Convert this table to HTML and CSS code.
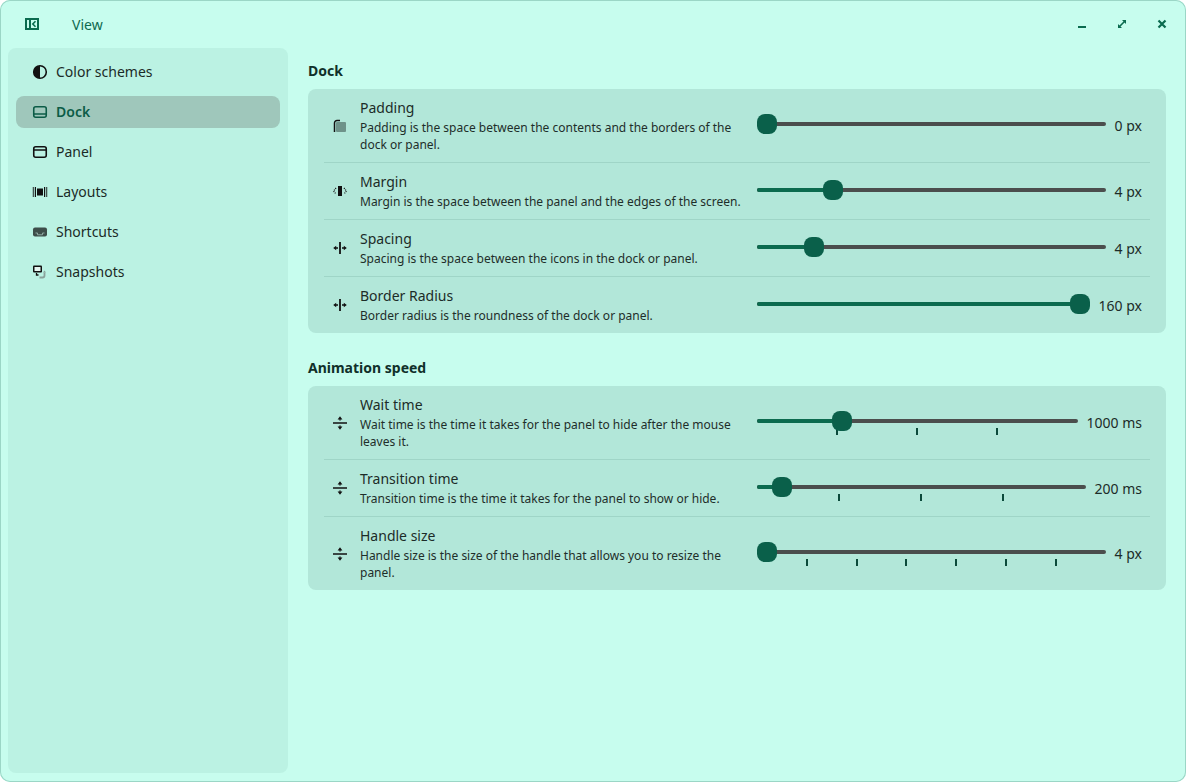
FILE: index.html
```html
<!DOCTYPE html>
<html>
<head>
<meta charset="utf-8">
<link rel="stylesheet" href="styles.css">
</head>
<body>
<div class="window">
  <header class="titlebar">
    <button class="tb-btn toggle">
      <svg width="16" height="16" viewBox="0 0 16 16"><path fill-rule="evenodd" fill="#0b6b4f" d="M1 2h14v12H1z M3 4v8h2V4z M7 4v8h6V4z"/><path d="M11.5 5.2 8.8 8l2.7 2.8" stroke="#0b6b4f" stroke-width="1.6" fill="none"/></svg>
    </button>
    <span class="title">View</span>
    <div class="spacer"></div>
    <div class="controls">
      <button class="tb-btn"><svg width="16" height="16" viewBox="0 0 16 16"><path d="M4 11h8" stroke="#0b6b4f" stroke-width="2"/></svg></button>
      <button class="tb-btn"><svg width="16" height="16" viewBox="0 0 16 16"><path d="M5 11 11 5" stroke="#0b6b4f" stroke-width="1.6"/><path d="M8 4h4v4z M4 8v4h4z" fill="#0b6b4f"/></svg></button>
      <button class="tb-btn"><svg width="16" height="16" viewBox="0 0 16 16"><path d="M4.5 4.5l7 7M11.5 4.5l-7 7" stroke="#0b6b4f" stroke-width="2.2"/></svg></button>
    </div>
  </header>
  <div class="main">
    <nav class="sidebar">
      <div class="nav-item">
        <svg class="ico" width="16" height="16" viewBox="0 0 16 16"><circle cx="8" cy="8" r="6.3" stroke="#111" stroke-width="1.6" fill="none"/><path d="M8 1.7a6.3 6.3 0 0 0 0 12.6z" fill="#111"/></svg>
        <span>Color schemes</span>
      </div>
      <div class="nav-item active">
        <svg class="ico" width="16" height="16" viewBox="0 0 16 16"><rect x="1.75" y="2.75" width="12.5" height="10.5" rx="2" stroke="#0c5c47" stroke-width="1.6" fill="none"/><path d="M2 10h12" stroke="#0c5c47" stroke-width="1.6"/></svg>
        <span>Dock</span>
      </div>
      <div class="nav-item">
        <svg class="ico" width="16" height="16" viewBox="0 0 16 16"><rect x="1.75" y="2.75" width="12.5" height="10.5" rx="2" stroke="#111" stroke-width="1.6" fill="none"/><path d="M2 6h12" stroke="#111" stroke-width="1.6"/></svg>
        <span>Panel</span>
      </div>
      <div class="nav-item">
        <svg class="ico" width="16" height="16" viewBox="0 0 16 16"><g fill="#111"><rect x="0.8" y="3" width="0.9" height="10"/><rect x="2.8" y="3" width="1.2" height="10"/><rect x="5" y="4.5" width="6" height="7"/><rect x="12" y="3" width="1.2" height="10"/><rect x="14.3" y="3" width="0.9" height="10"/></g></svg>
        <span>Layouts</span>
      </div>
      <div class="nav-item">
        <svg class="ico" width="16" height="16" viewBox="0 0 16 16"><rect x="1" y="3.5" width="14" height="9" rx="2" fill="#3d4d49"/><path d="M3.5 9h2v1.8h5V9h2" stroke="#8fa8a1" stroke-width="1" fill="none"/></svg>
        <span>Shortcuts</span>
      </div>
      <div class="nav-item">
        <svg class="ico" width="16" height="16" viewBox="0 0 16 16"><rect x="1" y="1.5" width="9" height="7" rx="1" fill="#111"/><rect x="2.5" y="3" width="6" height="4" fill="#e6f5f0"/><path d="M4.5 9v2h2" stroke="#111" stroke-width="1.3" fill="none"/><path d="M12.5 8.5v3a2 2 0 0 1-2 2H7.5" stroke="#8aa19b" stroke-width="1.8" fill="none"/><path d="M11 8.5h3l-1.5-2z" fill="#8aa19b"/></svg>
        <span>Snapshots</span>
      </div>
    </nav>
    <main class="content">
      <h2 class="section-title">Dock</h2>
      <section class="card">
        <div class="row">
          <svg class="ico" width="16" height="16" viewBox="0 0 16 16"><rect x="4" y="4" width="10" height="10" rx="1" fill="#6e9289"/><path d="M2.5 14V5a2.5 2.5 0 0 1 2.5-2.5h3" stroke="#111" stroke-width="1.5" fill="none"/></svg>
          <div class="text"><div class="name">Padding</div><div class="desc">Padding is the space between the contents and the borders of the dock or panel.</div></div>
          <div class="control"><div class="slider" style="--p:0"><div class="track"></div><div class="fill"></div><div class="thumb"></div></div><span class="value">0 px</span></div>
        </div>
        <div class="row">
          <svg class="ico" width="16" height="16" viewBox="0 0 16 16"><rect x="6" y="3" width="4" height="10" fill="#111"/><path d="M4 5 1.5 8 4 11M12 5l2.5 3L12 11" stroke="#111" stroke-width="1.2" stroke-dasharray="1 1" fill="none"/></svg>
          <div class="text"><div class="name">Margin</div><div class="desc">Margin is the space between the panel and the edges of the screen.</div></div>
          <div class="control"><div class="slider" style="--p:0.2"><div class="track"></div><div class="fill"></div><div class="thumb"></div></div><span class="value">4 px</span></div>
        </div>
        <div class="row">
          <svg class="ico" width="16" height="16" viewBox="0 0 16 16"><path d="M8 2v12" stroke="#111" stroke-width="1.8"/><path d="M3.5 8h2.5M10 8h2.5" stroke="#111" stroke-width="1.3"/><path d="M1.2 8 4.2 5.7v4.6zM14.8 8 11.8 5.7v4.6z" fill="#111"/></svg>
          <div class="text"><div class="name">Spacing</div><div class="desc">Spacing is the space between the icons in the dock or panel.</div></div>
          <div class="control"><div class="slider" style="--p:0.143"><div class="track"></div><div class="fill"></div><div class="thumb"></div></div><span class="value">4 px</span></div>
        </div>
        <div class="row">
          <svg class="ico" width="16" height="16" viewBox="0 0 16 16"><path d="M8 2v12" stroke="#111" stroke-width="1.8"/><path d="M3.5 8h2.5M10 8h2.5" stroke="#111" stroke-width="1.3"/><path d="M1.2 8 4.2 5.7v4.6zM14.8 8 11.8 5.7v4.6z" fill="#111"/></svg>
          <div class="text"><div class="name">Border Radius</div><div class="desc">Border radius is the roundness of the dock or panel.</div></div>
          <div class="control"><div class="slider" style="--p:1"><div class="track"></div><div class="fill"></div><div class="thumb"></div></div><span class="value">160 px</span></div>
        </div>
      </section>

      <h2 class="section-title second">Animation speed</h2>
      <section class="card">
        <div class="row">
          <svg class="ico" width="16" height="16" viewBox="0 0 16 16"><path d="M1 8h14" stroke="#111" stroke-width="1.5"/><path d="M8 5.5V4.2M8 10.5v1.3" stroke="#111" stroke-width="1.4"/><path d="M8 1.2 5.6 4.6h4.8zM8 14.8 5.6 11.4h4.8z" fill="#111"/></svg>
          <div class="text"><div class="name">Wait time</div><div class="desc">Wait time is the time it takes for the panel to hide after the mouse leaves it.</div></div>
          <div class="control"><div class="slider" style="--p:0.25"><div class="track"></div><div class="fill"></div><i class="tick" style="left:25%"></i><i class="tick" style="left:50%"></i><i class="tick" style="left:75%"></i><div class="thumb"></div></div><span class="value">1000 ms</span></div>
        </div>
        <div class="row">
          <svg class="ico" width="16" height="16" viewBox="0 0 16 16"><path d="M1 8h14" stroke="#111" stroke-width="1.5"/><path d="M8 5.5V4.2M8 10.5v1.3" stroke="#111" stroke-width="1.4"/><path d="M8 1.2 5.6 4.6h4.8zM8 14.8 5.6 11.4h4.8z" fill="#111"/></svg>
          <div class="text"><div class="name">Transition time</div><div class="desc">Transition time is the time it takes for the panel to show or hide.</div></div>
          <div class="control"><div class="slider" style="--p:0.05"><div class="track"></div><div class="fill"></div><i class="tick" style="left:25%"></i><i class="tick" style="left:50%"></i><i class="tick" style="left:75%"></i><div class="thumb"></div></div><span class="value">200 ms</span></div>
        </div>
        <div class="row">
          <svg class="ico" width="16" height="16" viewBox="0 0 16 16"><path d="M1 8h14" stroke="#111" stroke-width="1.5"/><path d="M8 5.5V4.2M8 10.5v1.3" stroke="#111" stroke-width="1.4"/><path d="M8 1.2 5.6 4.6h4.8zM8 14.8 5.6 11.4h4.8z" fill="#111"/></svg>
          <div class="text"><div class="name">Handle size</div><div class="desc">Handle size is the size of the handle that allows you to resize the panel.</div></div>
          <div class="control"><div class="slider" style="--p:0"><div class="track"></div><div class="fill"></div><i class="tick" style="left:14.286%"></i><i class="tick" style="left:28.571%"></i><i class="tick" style="left:42.857%"></i><i class="tick" style="left:57.143%"></i><i class="tick" style="left:71.429%"></i><i class="tick" style="left:85.714%"></i><div class="thumb"></div></div><span class="value">4 px</span></div>
        </div>
      </section>
    </main>
  </div>
</div>
</body>
</html>
```

FILE: styles.css
```css
* { box-sizing: border-box; }
html, body { margin: 0; padding: 0; background: #ffffff; }
body { font-family: "Noto Sans", "Open Sans", sans-serif; color: #1b2b27; }

.window {
  width: 1186px;
  height: 782px;
  background: #c7fdee;
  border-radius: 10px;
  box-shadow: inset 0 0 0 1px #9bd6c6;
  display: flex;
  flex-direction: column;
  overflow: hidden;
}

.titlebar {
  height: 48px;
  flex: none;
  display: flex;
  align-items: center;
  padding: 0 8px 0 16px;
}
.tb-btn {
  width: 32px;
  height: 32px;
  border: 0;
  padding: 0;
  background: transparent;
  display: flex;
  align-items: center;
  justify-content: center;
}
.toggle svg { margin-left: -1px; }
.title {
  margin-left: 24px;
  font-size: 14px;
  color: #0e6a50;
}
.spacer { flex: 1; }
.controls { display: flex; gap: 8px; }

.main {
  flex: 1;
  display: flex;
  gap: 20px;
  padding: 0 20px 9px 8px;
  min-height: 0;
}

.sidebar {
  width: 280px;
  flex: none;
  background: #bbf2e3;
  border-radius: 8px;
  padding: 8px;
  display: flex;
  flex-direction: column;
  gap: 8px;
}
.nav-item {
  height: 32px;
  display: flex;
  align-items: center;
  gap: 8px;
  padding: 0 16px;
  border-radius: 8px;
  font-size: 14px;
  line-height: 20px;
  color: #1b2b27;
}
.nav-item span { margin-top: -1px; }
.nav-item.active {
  background: #9fc7bb;
  color: #0c5c47;
  font-weight: 600;
}
.ico { flex: none; display: block; }

.content { flex: 1; min-width: 0; }
.section-title {
  margin: 13px 0 8px;
  font-size: 14px;
  line-height: 20px;
  font-weight: 700;
  color: #10302a;
}
.section-title.second { margin-top: 25px; }

.card {
  background: #b2e7d9;
  border-radius: 8px;
  padding: 0 16px;
}
.row {
  display: flex;
  align-items: center;
  gap: 12px;
  padding: 9px 8px 9px;
  border-bottom: 1px solid #9fd5c7;
}
.row:last-child { border-bottom: 0; }
.text { flex: 1; min-width: 0; }
.name { font-size: 14px; line-height: 20px; color: #1c2c28; }
.desc { font-size: 12px; line-height: 17px; margin-top: 1px; color: #1e2e2a; }

.control {
  flex: 1;
  min-width: 0;
  display: flex;
  align-items: center;
  gap: 9px;
}
.slider {
  position: relative;
  flex: 1;
  height: 20px;
  margin-top: -3px;
}
.track {
  position: absolute;
  left: 0; right: 0; top: 8px;
  height: 4px;
  border-radius: 2px;
  background: #4b4e4d;
}
.fill {
  position: absolute;
  left: 0; top: 8px;
  height: 4px;
  border-radius: 2px;
  background: #0b6b4f;
  width: calc(10px + var(--p) * (100% - 20px));
}
.thumb {
  position: absolute;
  top: 0;
  left: calc(var(--p) * (100% - 20px));
  width: 20px;
  height: 20px;
  border-radius: 8px;
  background: #0a604a;
}
.tick {
  position: absolute;
  top: 17px;
  width: 2px;
  height: 7px;
  margin-left: -1px;
  background: #0b4a3b;
}
.value {
  font-size: 14px;
  color: #1c2c28;
  white-space: nowrap;
}
```
